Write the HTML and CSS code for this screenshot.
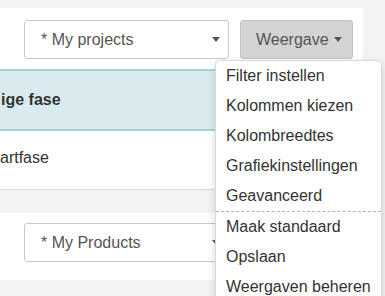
FILE: index.html
```html
<!DOCTYPE html>
<html>
<head>
<meta charset="utf-8">
<link rel="stylesheet" href="styles.css">
</head>
<body>
<div class="panel">
  <div class="toolbar">
    <div class="select"><span>* My projects</span><i class="caret"></i></div>
    <div class="btn"><span>Weergave</span><i class="caret"></i></div>
  </div>
  <div class="thead">ige fase</div>
  <div class="trow">artfase</div>
</div>
<div class="panel2">
  <div class="select"><span>* My Products</span><i class="caret"></i></div>
</div>
<ul class="menu">
  <li>Filter instellen</li>
  <li>Kolommen kiezen</li>
  <li>Kolombreedtes</li>
  <li>Grafiekinstellingen</li>
  <li>Geavanceerd</li>
  <li class="divider"></li>
  <li>Maak standaard</li>
  <li>Opslaan</li>
  <li>Weergaven beheren</li>
</ul>
</body>
</html>
```
FILE: styles.css
```css
html, body {
  margin: 0;
  padding: 0;
}
body {
  background: #f3f3f3;
  font-family: "Liberation Sans", Arial, sans-serif;
  font-size: 16px;
  color: #333;
  overflow: hidden;
  width: 385px;
  height: 296px;
  position: relative;
}
.panel {
  margin-top: 8px;
  width: 363px;
  background: #fff;
}
.toolbar {
  display: flex;
  justify-content: flex-end;
  gap: 11px;
  padding: 12px 10px 0 0;
  height: 49px;
}
.select {
  box-sizing: border-box;
  width: 205px;
  height: 39px;
  border: 1px solid #c8c8c8;
  border-radius: 3px;
  background: #fff;
  display: flex;
  align-items: center;
  padding: 0 8px 0 16px;
  color: #555;
}
.select span {
  flex: 1;
}
.caret {
  display: block;
  width: 0;
  height: 0;
  border-left: 4px solid transparent;
  border-right: 4px solid transparent;
  border-top: 5px solid #555;
}
.btn {
  box-sizing: border-box;
  width: 113px;
  height: 39px;
  background: #d3d3d3;
  border: 1px solid #c2c2c2;
  border-radius: 3px;
  display: flex;
  align-items: center;
  gap: 5px;
  padding-left: 15px;
  color: #555;
}
.thead {
  box-sizing: border-box;
  height: 62px;
  background: #d9ebef;
  border-top: 2px solid #a8d3d9;
  border-bottom: 2px solid #a8d3d9;
  font-weight: bold;
  display: flex;
  align-items: center;
  padding-left: 1px;
}
.trow {
  box-sizing: border-box;
  height: 59px;
  border-bottom: 1px solid #dcdcdc;
  display: flex;
  align-items: center;
  padding-bottom: 4px;
}
.panel2 {
  margin-top: 23px;
  width: 363px;
  background: #fff;
  padding: 10px 0 18px 24px;
  box-sizing: border-box;
}
.menu {
  position: absolute;
  left: 215px;
  top: 60px;
  width: 167px;
  box-sizing: border-box;
  margin: 0;
  padding: 0;
  list-style: none;
  background: #fff;
  border: 1px solid #d8d8d8;
  border-radius: 4px;
  box-shadow: 0 4px 10px rgba(0, 0, 0, 0.15);
  color: #333;
}
.menu li {
  height: 30px;
  line-height: 30px;
  padding-left: 10px;
  white-space: nowrap;
}
.menu li.divider {
  height: 0;
  padding: 0;
  border-top: 1px dashed #b5b5b5;
}
```
